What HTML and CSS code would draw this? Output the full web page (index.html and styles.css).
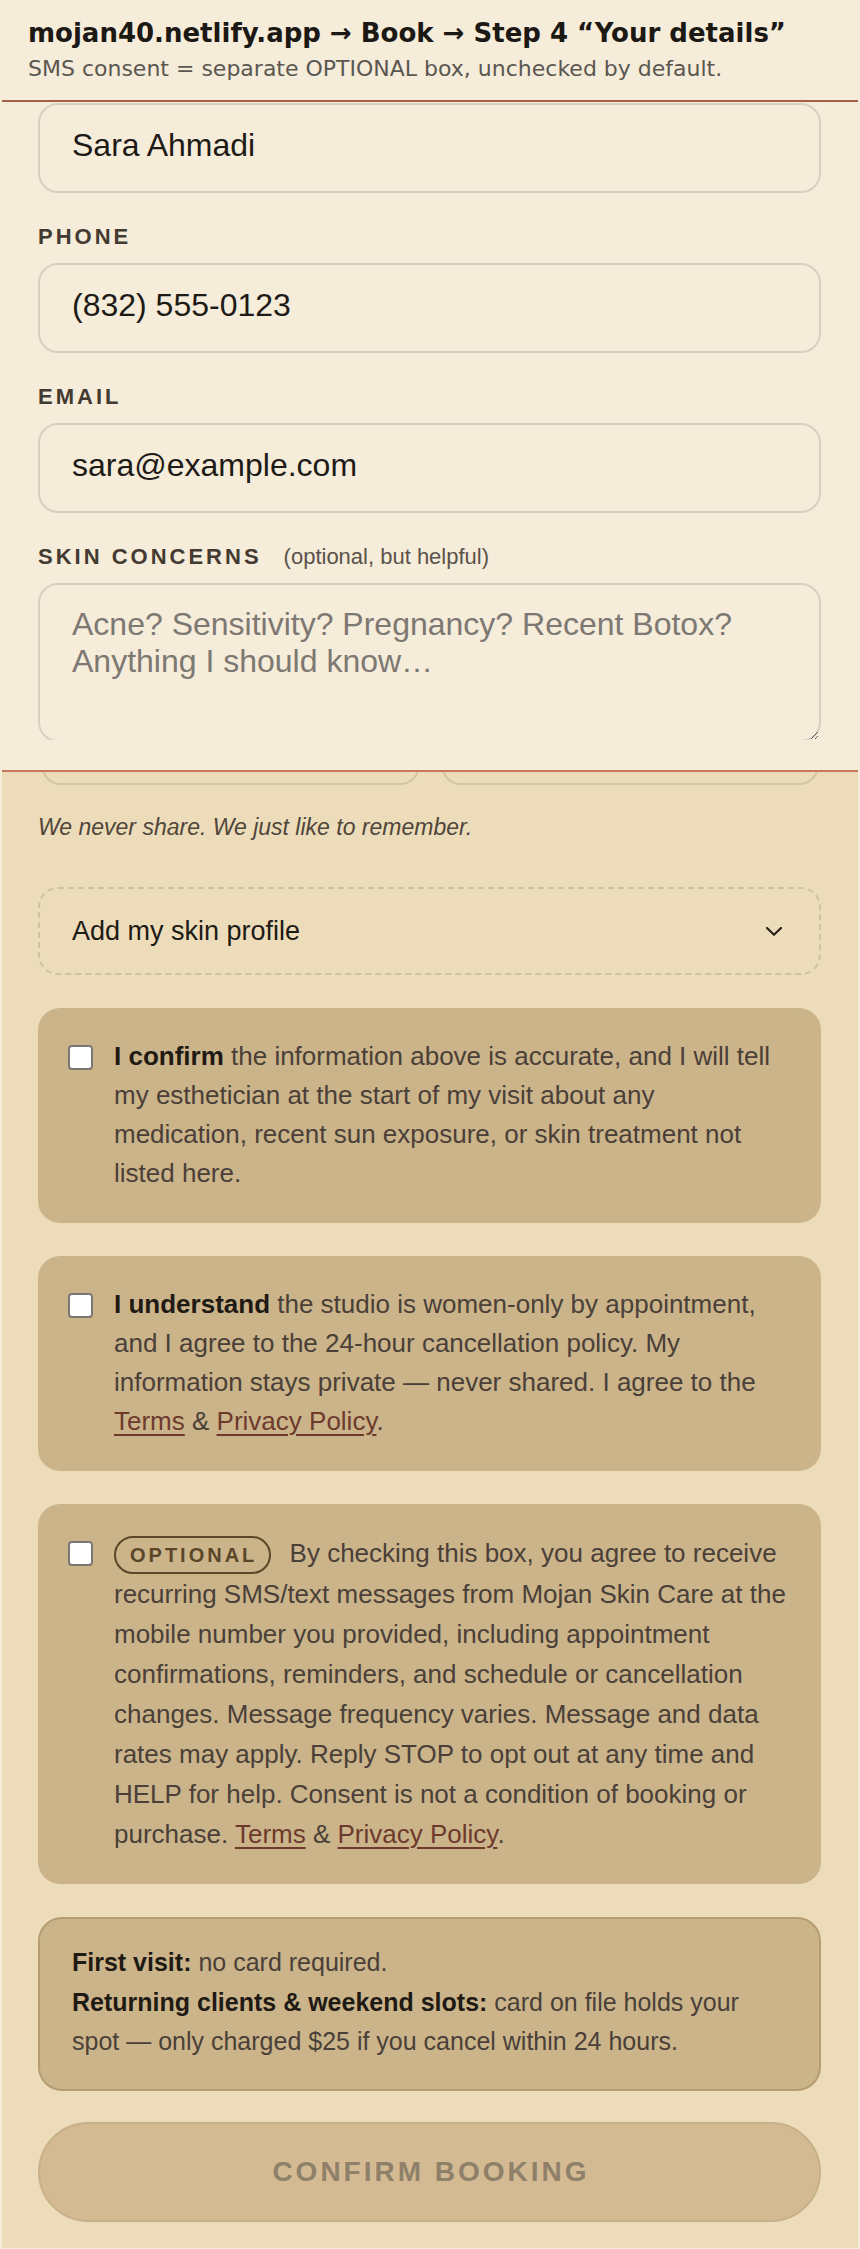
FILE: index.html
```html
<!DOCTYPE html>
<html lang="en">
<head>
<meta charset="utf-8">
<title>Your details — Mojan Skin Care</title>
<link rel="stylesheet" href="styles.css">
</head>
<body>
<header class="caption">
  <h1 class="caption-title">mojan40.netlify.app → Book → Step 4 “Your details”</h1>
  <p class="caption-note">SMS consent = separate OPTIONAL box, unchecked by default.</p>
</header>
<main class="stage">
  <section class="panel">
    <div class="panel-clip">
      <input class="field-input" type="text" value="Sara Ahmadi" aria-label="Name">
      <div class="field">
        <label class="field-label" for="phone">Phone</label>
        <input class="field-input" id="phone" type="tel" value="(832) 555-0123">
      </div>
      <div class="field">
        <label class="field-label" for="email">Email</label>
        <input class="field-input" id="email" type="email" value="sara@example.com">
      </div>
      <div class="field">
        <div class="field-label-row">
          <label class="field-label" for="concerns">Skin concerns</label>
          <span class="field-hint">(optional, but helpful)</span>
        </div>
        <textarea class="field-textarea" id="concerns" placeholder="Acne? Sensitivity? Pregnancy? Recent Botox? Anything I should know…"></textarea>
      </div>
    </div>
  </section>
  <div class="peek">
    <div class="peek-box"></div>
    <div class="peek-box"></div>
  </div>
  <div class="lower">
    <p class="privacy-note">We never share. We just like to remember.</p>
    <div class="disclosure">
      <span>Add my skin profile</span>
      <svg class="chevron" width="16" height="9" viewBox="0 0 16 9" aria-hidden="true"><polyline points="1,1 8,7.8 15,1" fill="none" stroke="#2a2118" stroke-width="2.2" stroke-linecap="round" stroke-linejoin="round"/></svg>
    </div>
    <label class="consent">
      <input class="consent-check" type="checkbox">
      <span class="consent-text"><strong>I confirm</strong> the information above is accurate, and I will tell my esthetician at the start of my visit about any medication, recent sun exposure, or skin treatment not listed here.</span>
    </label>
    <label class="consent">
      <input class="consent-check" type="checkbox">
      <span class="consent-text"><strong>I understand</strong> the studio is women-only by appointment, and I agree to the 24-hour cancellation policy. My information stays private — never shared. I agree to the <a class="link" href="#">Terms</a> &amp; <a class="link" href="#">Privacy Policy</a>.</span>
    </label>
    <label class="consent consent-sms">
      <input class="consent-check" type="checkbox">
      <span class="consent-text"><span class="pill">Optional</span> By checking this box, you agree to receive recurring SMS/text messages from Mojan Skin Care at the mobile number you provided, including appointment confirmations, reminders, and schedule or cancellation changes. Message frequency varies. Message and data rates may apply. Reply STOP to opt out at any time and HELP for help. Consent is not a condition of booking or purchase. <a class="link" href="#">Terms</a> &amp; <a class="link" href="#">Privacy Policy</a>.</span>
    </label>
    <div class="info">
      <p><strong>First visit:</strong> no card required.</p>
      <p><strong>Returning clients &amp; weekend slots:</strong> card on file holds your spot — only charged $25 if you cancel within 24 hours.</p>
    </div>
    <button class="confirm" type="button" disabled>Confirm booking</button>
  </div>
</main>
</body>
</html>
```
FILE: styles.css
```css
html, body {
  margin: 0;
  padding: 0;
}
body {
  background: #f5ecda;
  font-family: "Liberation Sans", Arial, sans-serif;
  color: #4a4038;
}

/* caption */
.caption {
  padding: 18px 28px 18px;
}
.caption-title {
  margin: 0;
  font-family: "DejaVu Sans", sans-serif;
  font-weight: 700;
  font-size: 26px;
  line-height: 30px;
  color: #1c1814;
}
.caption-note {
  margin: 8px 0 0;
  font-family: "DejaVu Sans", sans-serif;
  font-size: 22px;
  line-height: 26px;
  color: #5b5750;
}

/* stage */
.stage {
  margin: 0 2px;
  background: #ecdcb9;
  padding-bottom: 26px;
}
.panel {
  background: #f5ecda;
  border-top: 2px solid #a55f4b;
  border-bottom: 2px solid #c8795a;
  padding-bottom: 30px;
}
.panel-clip {
  height: 638px;
  box-sizing: border-box;
  overflow: hidden;
  padding: 1px 37px 0 36px;
}
.field {
  margin-top: 31px;
}
.field-label {
  display: block;
  margin-bottom: 14px;
  font-weight: 700;
  font-size: 22px;
  line-height: 25px;
  letter-spacing: 3px;
  text-transform: uppercase;
  color: #433a31;
}
.field-label-row {
  display: flex;
  align-items: baseline;
  gap: 22px;
  margin-bottom: 14px;
}
.field-label-row .field-label {
  margin-bottom: 0;
}
.field-hint {
  font-size: 22px;
  line-height: 25px;
  color: #5b524a;
}
.field-input,
.field-textarea {
  display: block;
  width: 100%;
  box-sizing: border-box;
  margin: 0;
  border: 2px solid #d8d0c0;
  border-radius: 20px;
  background: #f5ecda;
  font-family: "Liberation Sans", Arial, sans-serif;
  font-size: 32px;
  color: #1e1a16;
  outline: none;
}
.field-input {
  height: 90px;
  padding: 21px 32px 27px;
  line-height: 37px;
}
.field-textarea {
  height: 159px;
  padding: 21px 32px;
  line-height: 37px;
  resize: vertical;
}
.field-textarea::placeholder {
  color: #7d7872;
  opacity: 1;
}

/* peeking boxes under the panel */
.peek {
  height: 13px;
  overflow: hidden;
  display: flex;
  align-items: flex-end;
  gap: 21px;
  padding: 0 39px;
}
.peek-box {
  flex: 1 1 0;
  height: 60px;
  flex-shrink: 0;
  box-sizing: border-box;
  border: 2px solid #d2c5a5;
  border-radius: 20px;
}

/* lower form */
.lower {
  display: flex;
  flex-direction: column;
  padding: 0 37px 0 36px;
}
.privacy-note {
  margin: 29px 0 0;
  font-style: italic;
  font-size: 23px;
  line-height: 26px;
  color: #50463b;
}
.disclosure {
  margin-top: 47px;
  height: 88px;
  box-sizing: border-box;
  display: flex;
  align-items: center;
  justify-content: space-between;
  padding: 0 37px 0 32px;
  border: 2px dashed #cfc2a4;
  border-radius: 20px;
  font-size: 27px;
  color: #1e1a16;
}
.chevron {
  display: block;
}
.consent {
  margin-top: 33px;
  display: flex;
  align-items: flex-start;
  gap: 21px;
  padding: 29px 30px 30px;
  background: #cbb48a;
  border-radius: 22px;
  font-size: 26px;
  line-height: 39px;
  color: #4a4038;
}
.consent-sms {
  line-height: 40px;
}
.consent-check {
  -webkit-appearance: none;
  appearance: none;
  flex: none;
  width: 25px;
  height: 25px;
  margin: 8px 0 0;
  box-sizing: border-box;
  background: #ffffff;
  border: 2px solid #7b7772;
  border-radius: 4px;
}
.consent-text strong {
  color: #1f1a14;
}
.link {
  color: #6d3a2c;
  text-decoration: underline;
  text-decoration-thickness: 2px;
  text-underline-offset: 4px;
}
.pill {
  display: inline-block;
  vertical-align: middle;
  margin-right: 11px;
  padding: 7px 12px 7px 14px;
  border: 2px solid #5a4628;
  border-radius: 999px;
  font-weight: 700;
  font-size: 20px;
  line-height: 20px;
  letter-spacing: 3px;
  text-transform: uppercase;
  color: #5a4628;
}
.info {
  margin-top: 33px;
  padding: 24px 32px 27px;
  background: #cbb48a;
  border: 2px solid #b49d72;
  border-radius: 24px;
  font-size: 25px;
  line-height: 39.5px;
  color: #4a4038;
}
.info p {
  margin: 0;
}
.info strong {
  color: #1f1a14;
}
.confirm {
  margin-top: 31px;
  height: 100px;
  width: 100%;
  box-sizing: border-box;
  border: 2px solid #c8b089;
  border-radius: 50px;
  background: #d3ba93;
  font-family: "Liberation Sans", Arial, sans-serif;
  font-weight: 700;
  font-size: 28px;
  letter-spacing: 3px;
  text-transform: uppercase;
  color: #8f806a;
  padding: 0 0 0 3px;
}
```
